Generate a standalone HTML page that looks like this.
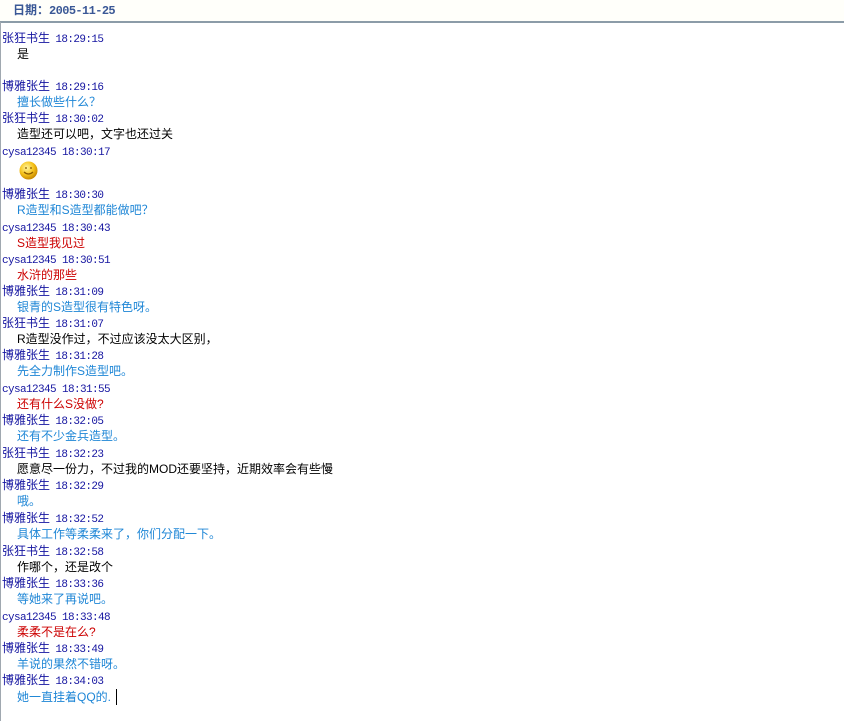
<!DOCTYPE html>
<html><head><meta charset="utf-8"><style>
html,body{margin:0;padding:0;width:844px;height:721px;background:#fff;overflow:hidden;position:relative;font-family:"Liberation Sans","Noto Sans CJK SC","WenQuanYi Zen Hei",sans-serif;font-size:12px}
.lb{position:absolute;left:0;top:22px;width:1px;height:699px;background:#a0a8b0}
.hd{position:absolute;left:0;top:0;width:844px;height:21px;background:#fffffa;border-bottom:2px solid #8c9ca8}
.hd span{position:absolute;left:13px;top:3px;font-weight:bold;color:#3a5896;font-size:12px;line-height:14px}
.hd b{font-family:"Liberation Mono",monospace;font-size:12px;letter-spacing:-0.6px}
.l{position:absolute;white-space:nowrap;line-height:16px;height:16px}
.n{left:2px;color:#1414a0}
.n i{font-style:normal;font-family:"Liberation Mono",monospace;font-size:11px;letter-spacing:-0.6px;margin-left:2px}
.n i.c{margin-left:0}
.t{left:17px}
.B{color:#1e86d6}.K{color:#000}.R{color:#cc0000}
.cur{position:absolute;left:116px;top:689px;width:1px;height:16px;background:#000}
</style></head><body>
<div class="hd"><span>日期：<b>2005-11-25</b></span></div>
<div class="lb"></div>
<div class="l n" style="top:30px">张狂书生 <i>18:29:15</i></div>
<div class="l t K" style="top:46px">是</div>
<div class="l n" style="top:78px">博雅张生 <i>18:29:16</i></div>
<div class="l t B" style="top:94px">擅长做些什么？</div>
<div class="l n" style="top:110px">张狂书生 <i>18:30:02</i></div>
<div class="l t K" style="top:126px">造型还可以吧，文字也还过关</div>
<div class="l n" style="top:143px"><i class="c">cysa12345 18:30:17</i></div>
<svg style="position:absolute;left:19px;top:161px" width="19" height="19"><defs><radialGradient id="g" cx="40%" cy="35%" r="65%"><stop offset="0" stop-color="#fff6a0"/><stop offset="0.6" stop-color="#f6c21a"/><stop offset="1" stop-color="#c88a00"/></radialGradient></defs><circle cx="9.5" cy="9.5" r="9" fill="url(#g)"/><path d="M5 11 Q9.5 15 14 11" stroke="#8a5a00" stroke-width="1.2" fill="none"/><path d="M6 7h2M11 7h2" stroke="#8a5a00" stroke-width="1.2"/></svg>
<div class="l n" style="top:186px">博雅张生 <i>18:30:30</i></div>
<div class="l t B" style="top:202px">R造型和S造型都能做吧？</div>
<div class="l n" style="top:219px"><i class="c">cysa12345 18:30:43</i></div>
<div class="l t R" style="top:235px">S造型我见过</div>
<div class="l n" style="top:251px"><i class="c">cysa12345 18:30:51</i></div>
<div class="l t R" style="top:267px">水浒的那些</div>
<div class="l n" style="top:283px">博雅张生 <i>18:31:09</i></div>
<div class="l t B" style="top:299px">银青的S造型很有特色呀。</div>
<div class="l n" style="top:315px">张狂书生 <i>18:31:07</i></div>
<div class="l t K" style="top:331px">R造型没作过，不过应该没太大区别，</div>
<div class="l n" style="top:347px">博雅张生 <i>18:31:28</i></div>
<div class="l t B" style="top:363px">先全力制作S造型吧。</div>
<div class="l n" style="top:380px"><i class="c">cysa12345 18:31:55</i></div>
<div class="l t R" style="top:396px">还有什么S没做?</div>
<div class="l n" style="top:412px">博雅张生 <i>18:32:05</i></div>
<div class="l t B" style="top:428px">还有不少金兵造型。</div>
<div class="l n" style="top:445px">张狂书生 <i>18:32:23</i></div>
<div class="l t K" style="top:461px">愿意尽一份力，不过我的MOD还要坚持，近期效率会有些慢</div>
<div class="l n" style="top:477px">博雅张生 <i>18:32:29</i></div>
<div class="l t B" style="top:493px">哦。</div>
<div class="l n" style="top:510px">博雅张生 <i>18:32:52</i></div>
<div class="l t B" style="top:526px">具体工作等柔柔来了，你们分配一下。</div>
<div class="l n" style="top:543px">张狂书生 <i>18:32:58</i></div>
<div class="l t K" style="top:559px">作哪个，还是改个</div>
<div class="l n" style="top:575px">博雅张生 <i>18:33:36</i></div>
<div class="l t B" style="top:591px">等她来了再说吧。</div>
<div class="l n" style="top:608px"><i class="c">cysa12345 18:33:48</i></div>
<div class="l t R" style="top:624px">柔柔不是在么?</div>
<div class="l n" style="top:640px">博雅张生 <i>18:33:49</i></div>
<div class="l t B" style="top:656px">羊说的果然不错呀。</div>
<div class="l n" style="top:672px">博雅张生 <i>18:34:03</i></div>
<div class="l t B" style="top:689px">她一直挂着QQ的.</div>
<div class="cur"></div>
</body></html>
